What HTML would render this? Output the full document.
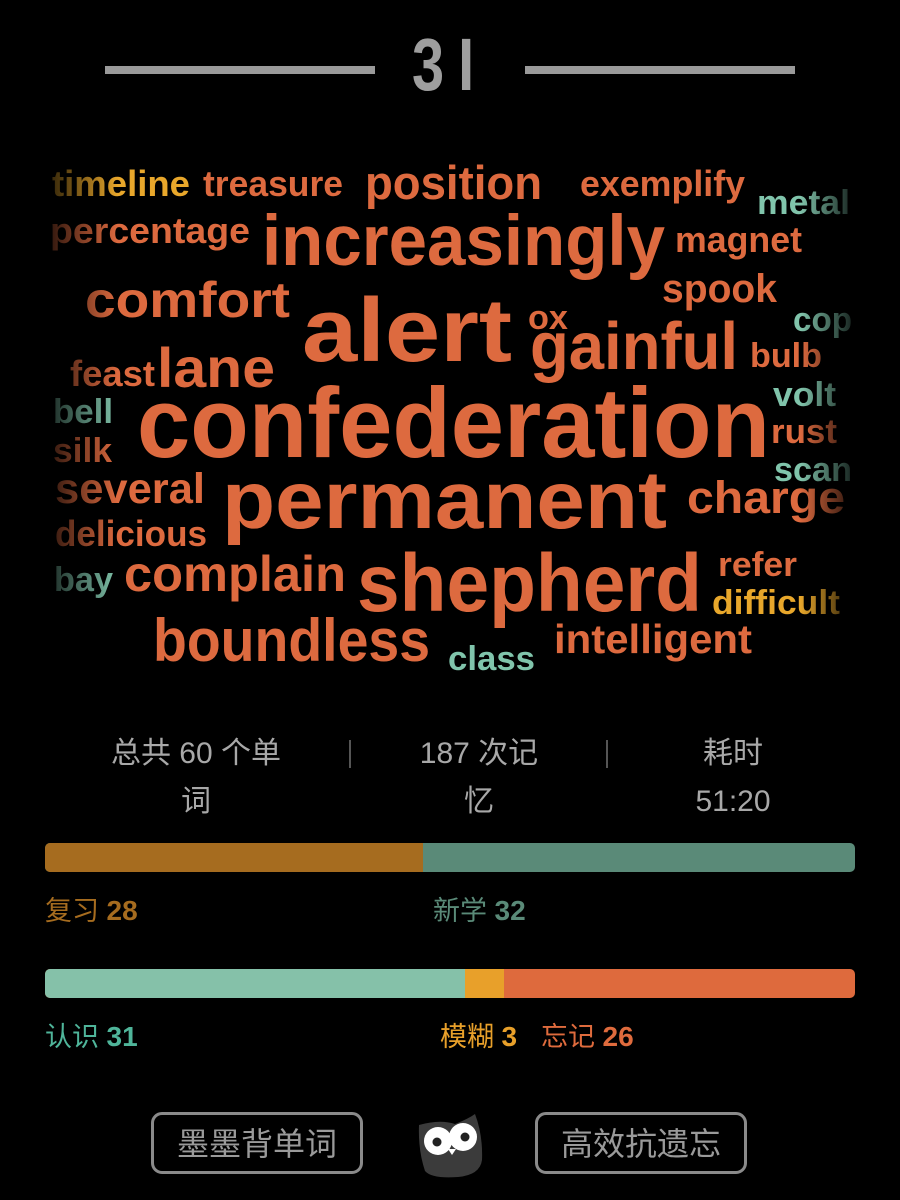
<!DOCTYPE html>
<html><head><meta charset="utf-8">
<style>
html,body{margin:0;padding:0;background:#000;}
body{width:900px;height:1200px;position:relative;overflow:hidden;font-family:"Liberation Sans","Noto Sans CJK SC",sans-serif;}
.abs{position:absolute;}
.line{position:absolute;top:66px;height:8px;background:#9a9a9a;}
.stat{position:absolute;width:260px;text-align:center;color:#a8a8a8;font-size:30px;line-height:48px;}
.sep{position:absolute;top:740px;width:2px;height:28px;background:#555;}
.lbl{position:absolute;font-size:27px;line-height:30px;}
.lbl b{font-family:"Liberation Sans",sans-serif;font-size:28px;}
.btn{position:absolute;top:1112px;width:206px;height:56px;border:3px solid #8a8a8a;border-radius:11px;color:#9a9a9a;font-size:32px;line-height:58px;text-align:center;}
</style></head><body>
<div class="line" style="left:105px;width:270px"></div>
<div class="line" style="left:525px;width:270px"></div>
<div class="abs" style="left:412px;top:28px;width:90px;height:74px;color:#9e9e9e;font:bold 74px/74px 'Liberation Sans',sans-serif;letter-spacing:18px;transform:scaleX(0.78);transform-origin:left;">3I</div>

<svg class="abs" style="left:0;top:0" width="900" height="700" font-family="Liberation Sans, sans-serif" font-weight="bold">
<g fill="#dd6a3f">
<text x="52" y="196" font-size="36" textLength="138" lengthAdjust="spacingAndGlyphs" fill="#e8a72b">timeline</text>
<text x="203" y="196" font-size="36" textLength="140" lengthAdjust="spacingAndGlyphs">treasure</text>
<text x="365" y="199" font-size="47" textLength="177" lengthAdjust="spacingAndGlyphs">position</text>
<text x="580" y="196" font-size="36" textLength="165" lengthAdjust="spacingAndGlyphs">exemplify</text>
<text x="757" y="214" font-size="34" textLength="93" lengthAdjust="spacingAndGlyphs" fill="#80c4ab">metal</text>
<text x="50" y="243" font-size="36" textLength="200" lengthAdjust="spacingAndGlyphs">percentage</text>
<text x="262" y="265" font-size="71" textLength="403" lengthAdjust="spacingAndGlyphs">increasingly</text>
<text x="675" y="252" font-size="36" textLength="127" lengthAdjust="spacingAndGlyphs">magnet</text>
<text x="85" y="317" font-size="50" textLength="205" lengthAdjust="spacingAndGlyphs">comfort</text>
<text x="662" y="302" font-size="40" textLength="115" lengthAdjust="spacingAndGlyphs">spook</text>
<text x="302" y="361" font-size="90" textLength="210" lengthAdjust="spacingAndGlyphs">alert</text>
<text x="528" y="329" font-size="34" textLength="40" lengthAdjust="spacingAndGlyphs">ox</text>
<text x="530" y="369" font-size="67" textLength="208" lengthAdjust="spacingAndGlyphs">gainful</text>
<text x="793" y="331" font-size="34" textLength="59" lengthAdjust="spacingAndGlyphs" fill="#80c4ab">cop</text>
<text x="750" y="367" font-size="34" textLength="72" lengthAdjust="spacingAndGlyphs">bulb</text>
<text x="70" y="386" font-size="36" textLength="85" lengthAdjust="spacingAndGlyphs">feast</text>
<text x="157" y="387" font-size="56" textLength="118" lengthAdjust="spacingAndGlyphs">lane</text>
<text x="773" y="406" font-size="34" textLength="63" lengthAdjust="spacingAndGlyphs" fill="#80c4ab">volt</text>
<text x="53" y="423" font-size="34" textLength="60" lengthAdjust="spacingAndGlyphs" fill="#80c4ab">bell</text>
<text x="137" y="457" font-size="99" textLength="633" lengthAdjust="spacingAndGlyphs">confederation</text>
<text x="771" y="443" font-size="34" textLength="66" lengthAdjust="spacingAndGlyphs">rust</text>
<text x="53" y="462" font-size="34" textLength="59" lengthAdjust="spacingAndGlyphs">silk</text>
<text x="774" y="481" font-size="34" textLength="78" lengthAdjust="spacingAndGlyphs" fill="#80c4ab">scan</text>
<text x="55" y="503" font-size="43" textLength="150" lengthAdjust="spacingAndGlyphs">several</text>
<text x="222" y="528" font-size="82" textLength="445" lengthAdjust="spacingAndGlyphs">permanent</text>
<text x="687" y="513" font-size="45" textLength="158" lengthAdjust="spacingAndGlyphs">charge</text>
<text x="55" y="546" font-size="36" textLength="152" lengthAdjust="spacingAndGlyphs">delicious</text>
<text x="718" y="576" font-size="34" textLength="79" lengthAdjust="spacingAndGlyphs">refer</text>
<text x="124" y="591" font-size="50" textLength="222" lengthAdjust="spacingAndGlyphs">complain</text>
<text x="357" y="611" font-size="82" textLength="345" lengthAdjust="spacingAndGlyphs">shepherd</text>
<text x="54" y="591" font-size="34" textLength="59" lengthAdjust="spacingAndGlyphs" fill="#80c4ab">bay</text>
<text x="712" y="614" font-size="34" textLength="128" lengthAdjust="spacingAndGlyphs" fill="#e8a72b">difficult</text>
<text x="153" y="661" font-size="60" textLength="277" lengthAdjust="spacingAndGlyphs">boundless</text>
<text x="448" y="670" font-size="34" textLength="87" lengthAdjust="spacingAndGlyphs" fill="#80c4ab">class</text>
<text x="554" y="653" font-size="41" textLength="198" lengthAdjust="spacingAndGlyphs">intelligent</text>
</g>
<defs>
<linearGradient id="lf" x1="0" x2="1"><stop offset="0" stop-color="#000" stop-opacity="0.8"/><stop offset="1" stop-color="#000" stop-opacity="0"/></linearGradient>
<linearGradient id="rf" x1="0" x2="1"><stop offset="0" stop-color="#000" stop-opacity="0"/><stop offset="1" stop-color="#000" stop-opacity="0.85"/></linearGradient>
</defs>
<rect x="48" y="150" width="70" height="530" fill="url(#lf)"/>
<rect x="800" y="150" width="55" height="530" fill="url(#rf)"/>
</svg>

<div class="stat" style="left:66px;top:730px">总共 60 个单<br>词</div>
<div class="stat" style="left:349px;top:730px">187 次记<br>忆</div>
<div class="stat" style="left:603px;top:730px">耗时<br>51:20</div>
<div class="sep" style="left:349px"></div>
<div class="sep" style="left:606px"></div>

<div class="abs" style="left:45px;top:843px;width:810px;height:29px;border-radius:5px;overflow:hidden;background:#5a8a78;">
<div style="width:378px;height:100%;background:#a66c1f"></div></div>
<div class="lbl" style="left:45px;top:896px;color:#a66c1f">复习 <b>28</b></div>
<div class="lbl" style="left:433px;top:896px;color:#5a8a78">新学 <b>32</b></div>

<div class="abs" style="left:45px;top:969px;width:810px;height:29px;border-radius:5px;overflow:hidden;background:#de6a3d;">
<div style="position:absolute;left:0;width:420px;height:100%;background:#85c1a9"></div>
<div style="position:absolute;left:420px;width:39px;height:100%;background:#e8a02a"></div></div>
<div class="lbl" style="left:45px;top:1022px;color:#4fb59a">认识 <b>31</b></div>
<div class="lbl" style="left:440px;top:1022px;color:#e8a02a">模糊 <b>3</b></div>
<div class="lbl" style="left:541px;top:1022px;color:#df6b3d">忘记 <b>26</b></div>

<div class="btn" style="left:151px">墨墨背单词</div>
<div class="btn" style="left:535px">高效抗遗忘</div>
<svg class="abs" style="left:410px;top:1105px" width="80" height="80">
<path d="M9 20 Q30 14 45 19 Q58 14 65 9 Q73 30 72 55 Q70 70 48 72 Q22 74 15 66 Q8 45 9 20Z" fill="#3b3b3b"/>
<circle cx="28" cy="36" r="14" fill="#fff"/>
<circle cx="53" cy="32" r="14" fill="#fff"/>
<circle cx="27" cy="37" r="4.5" fill="#222"/>
<circle cx="55" cy="32" r="4.5" fill="#222"/>
<path d="M38 44 L42 50 L46 44Z" fill="#fff"/>
</svg>
</body></html>
